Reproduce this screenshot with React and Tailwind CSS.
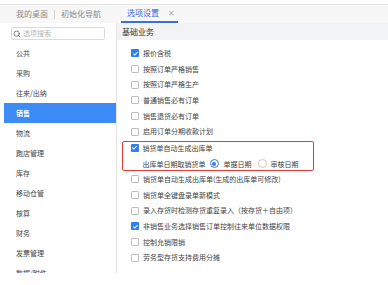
import { Search } from "lucide-react";

const menu = ["公共", "采购", "往来/出纳", "销售", "物流", "跑店管理", "库存", "移动仓管", "核算", "财务", "发票管理", "数据/附件"];

const rowsTop = [
  { label: "报价含税", checked: true },
  { label: "按照订单严格销售" },
  { label: "按照订单严格生产" },
  { label: "普通销售必有订单" },
  { label: "销售退货必有订单" },
  { label: "启用订单分期收款计划" },
];

const rowsBottom = [
  { label: "销货单自动生成出库单(生成的出库单可修改)" },
  { label: "销货单全键盘录单新模式" },
  { label: "录入存货时检测存货重复录入（按存货＋自由项）" },
  { label: "非销售业务选择销售订单控制往来单位数据权限", checked: true },
  { label: "控制允销限销" },
  { label: "劳务型存货支持费用分摊" },
];

function Checkbox({ checked }) {
  return checked ? (
    <span className="w-[8px] h-[8px] rounded-[1px] bg-[#2f7ff0] flex items-center justify-center shrink-0">
      <svg viewBox="0 0 8 8" className="w-[7px] h-[7px]">
        <polyline points="1.5,4.2 3.2,5.8 6.5,2.3" fill="none" stroke="white" strokeWidth="1.2" />
      </svg>
    </span>
  ) : (
    <span className="w-[8px] h-[8px] rounded-[1px] border border-[#bfbfbf] bg-white shrink-0" />
  );
}

function Row({ label, checked }) {
  return (
    <div className="h-[15.67px] flex items-center pl-[14px] gap-[4px] text-[7px] text-[#444] whitespace-nowrap">
      <Checkbox checked={checked} />
      <span>{label}</span>
    </div>
  );
}

function Radio({ on }) {
  return on ? (
    <span className="w-[9px] h-[9px] rounded-full border border-[#2f7ff0] flex items-center justify-center shrink-0">
      <span className="w-[4px] h-[4px] rounded-full bg-[#2f7ff0]" />
    </span>
  ) : (
    <span className="w-[9px] h-[9px] rounded-full border border-[#c8c8c8] shrink-0" />
  );
}

export default function App() {
  return (
    <div className="w-[388px] h-[285px] bg-white overflow-hidden" style={{ fontFamily: '"Noto Sans CJK SC", "Noto Sans", sans-serif' }}>
      <div className="h-[5px] bg-white border-b border-[#e3e3e3]" />
      <div className="h-[18px] bg-[#f7f7f7] flex items-stretch text-[8px] text-[#8a8a8a]">
        <div className="w-[116px] flex items-center pl-[16px]">
          <span>我的桌面</span>
          <span className="w-px h-[9px] bg-[#d4d4d4] mx-[6px]" />
          <span>初始化导航</span>
        </div>
        <div className="ml-[5px] w-[57px] flex items-center pl-[6px] gap-[9px] border-b-2 border-[#3b6fd9]">
          <span className="text-[#2f6bd6]">选项设置</span>
          <span className="text-[#b0b0b0] text-[8px]">✕</span>
        </div>
      </div>
      <div className="flex h-[250px]">
        <div className="w-[117px] border-r border-[#e6e6e6] overflow-hidden shrink-0 pt-[4px]">
          <div className="ml-[11px] w-[94px] h-[13px] border border-[#dcdcdc] rounded-[2px] flex items-center pl-[1px] gap-[2px] text-[7px] text-[#b5b5b5]">
            <Search className="w-[8px] h-[8px] text-[#555]" strokeWidth={2.2} />
            <span>选项搜索</span>
          </div>
          <div className="mt-[3px]">
            {menu.map((m) => (
              <div key={m} className={m === "销售" ? "h-[20px] ml-[4px] pl-[12px] flex items-center bg-[#3d8bf7] text-white text-[7px] font-bold" : "h-[20px] pl-[16px] flex items-center text-[7px] text-[#444]"}>
                {m}
              </div>
            ))}
          </div>
        </div>
        <div className="flex-1">
          <div className="h-[17px] bg-[#f2f3f5] flex items-center pl-[5px] text-[8px] text-[#333]">基础业务</div>
          <div className="pt-[5.5px]">
            {rowsTop.map((r) => (
              <Row key={r.label} {...r} />
            ))}
            <div className="mt-[1.5px] mb-[0.5px] ml-[5px] w-[192px] h-[30px] border-[1.5px] border-[#e53a35] rounded-[2px] flex flex-col justify-between">
              <div className="h-[12px] flex items-center pl-[7.5px] gap-[4px] text-[7px] text-[#444]">
                <Checkbox checked />
                <span>销货单自动生成出库单</span>
              </div>
              <div className="h-[12px] flex items-center pl-[19.5px] text-[7px] text-[#444] whitespace-nowrap">
                <span>出库单日期取销货单</span>
                <span className="ml-[4px] flex items-center gap-[5px]">
                  <Radio on />
                  <span>单据日期</span>
                </span>
                <span className="ml-[6px] flex items-center gap-[4px]">
                  <Radio />
                  <span>审核日期</span>
                </span>
              </div>
            </div>
            {rowsBottom.map((r) => (
              <Row key={r.label} {...r} />
            ))}
          </div>
        </div>
      </div>
    </div>
  );
}
